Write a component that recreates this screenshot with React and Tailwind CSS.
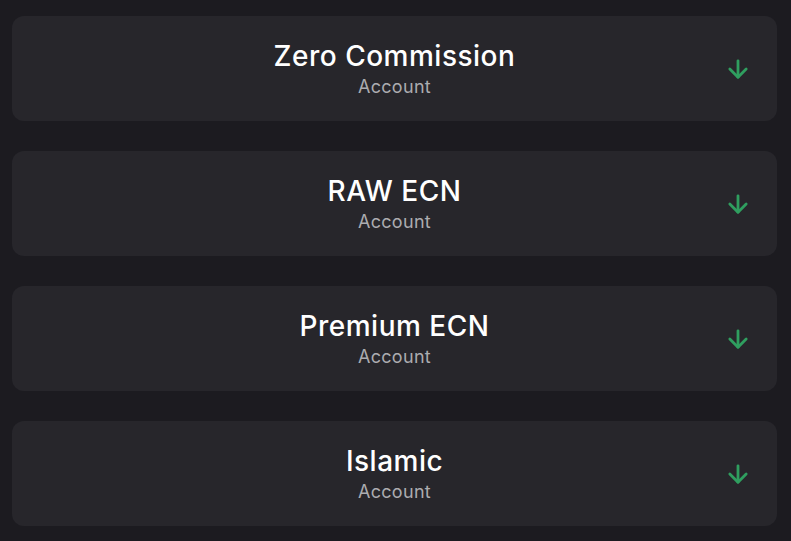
import { ArrowDown } from "lucide-react";

const accounts = ["Zero Commission", "RAW ECN", "Premium ECN", "Islamic"];

export default function App() {
  return (
    <div className="min-h-[541px] bg-[#1c1b20] pl-3 pr-[14px] pt-4 pb-4 font-['Inter',sans-serif]">
      <div className="flex flex-col gap-[30px]">
        {accounts.map((name) => (
          <div
            key={name}
            className="relative flex h-[105px] flex-col items-center justify-center rounded-xl bg-[#27262b]"
          >
            <p className="text-[28px] font-medium leading-[36px] tracking-[0.5px] text-white">{name}</p>
            <p className="text-[18px] leading-[26px] tracking-[0.3px] text-[#acacb0]">Account</p>
            <ArrowDown
              className="absolute right-[25px] top-1/2 -translate-y-1/2 text-[#2f9e5f]"
              size={28}
              strokeWidth={2.4}
            />
          </div>
        ))}
      </div>
    </div>
  );
}
